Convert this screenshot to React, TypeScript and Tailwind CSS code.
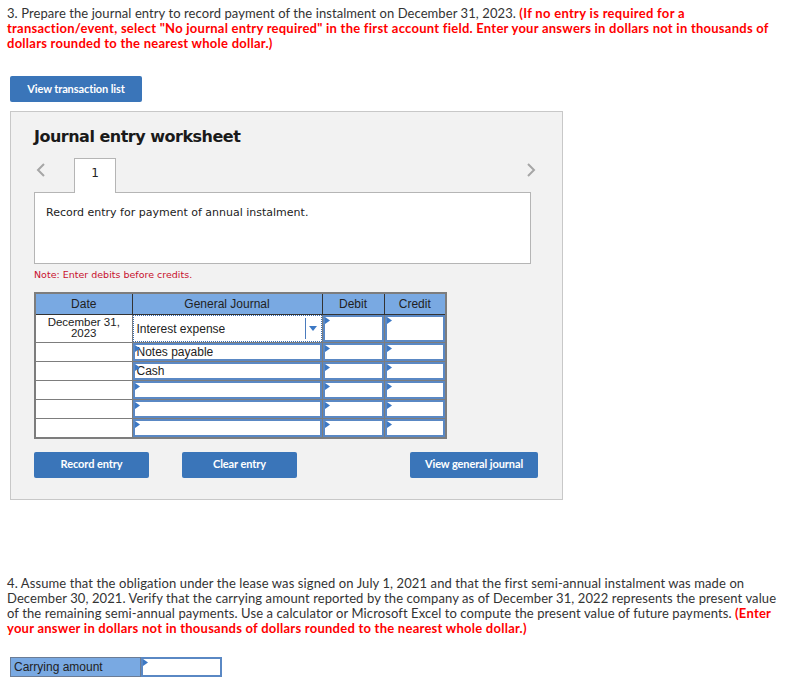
import React from "react";

const Marker = () => (
  <svg width="5" height="7" viewBox="0 0 5 7" className="absolute left-0 top-0">
    <polygon points="0,0 5,3.5 0,7" fill="#3c78c4" />
  </svg>
);

const InputCell = ({ text, h }: { text?: string; h: number }) => (
  <td className="p-0 border border-[#7d7d7d]">
    <div
      className="relative bg-white border-2 border-[#5a88c4] flex items-center pl-[2px] text-[12px] text-[#222]"
      style={{ height: h }}
    >
      <Marker />
      {text}
    </div>
  </td>
);

const DateCell = ({ text, h }: { text?: React.ReactNode; h: number }) => (
  <td className="p-0 border border-[#7d7d7d] bg-white">
    <div className="flex items-center justify-center text-center leading-[11px] text-[11.5px] text-[#222]" style={{ height: h }}>
      {text}
    </div>
  </td>
);

export default function App() {
  const sans = { fontFamily: "Lato, 'Liberation Sans', sans-serif" };
  const verdana = { fontFamily: "'DejaVu Sans', Verdana, sans-serif" };
  const arial = { fontFamily: "'Liberation Sans', Arial, sans-serif" };
  const rows = [
    { date: "", gj: "Notes payable" },
    { date: "", gj: "Cash" },
    { date: "", gj: "" },
    { date: "", gj: "" },
    { date: "", gj: "" },
  ];
  return (
    <div className="w-[794px] h-[688px] bg-white overflow-hidden" style={sans}>
      <div className="pt-[6px] pl-[7px] text-[13px] leading-[15px] text-[#333] whitespace-nowrap tracking-[0.08px]">
        <div>
          3. Prepare the journal entry to record payment of the instalment on December 31, 2023.{" "}
          <span className="font-bold text-[#f00] tracking-[0.3px]">(If no entry is required for a</span>
        </div>
        <div className="font-bold text-[#f00] tracking-[0.25px]">
          transaction/event, select "No journal entry required" in the first account field. Enter your answers in dollars not in thousands of
        </div>
        <div className="font-bold text-[#f00] tracking-[0.25px]">dollars rounded to the nearest whole dollar.)</div>
      </div>

      <button className="mt-[25px] ml-[10px] w-[132px] h-[26px] rounded-[2px] bg-[#3a75b9] text-white text-[11px] font-bold tracking-[-0.1px] flex items-center justify-center">
        View transaction list
      </button>

      <div className="mt-[9px] ml-[10px] w-[553px] h-[389px] bg-[#f2f2f2] border border-[#c8c8c8] pl-[23px] pt-[14px]">
        <div className="text-[16px] leading-[22px] font-bold text-[#1a1a1a] tracking-[-0.5px]" style={verdana}>
          Journal entry worksheet
        </div>
        <div className="mt-[10px] w-[502px] flex items-start justify-between">
          <div className="flex items-start">
            <svg width="10" height="14" viewBox="0 0 10 14" className="mt-[5px] ml-[2px]">
              <polyline points="8,1 2,7 8,13" fill="none" stroke="#a6a6a6" strokeWidth="2" />
            </svg>
            <div
              className="ml-[28px] w-[42px] h-[35px] bg-white border border-b-0 border-[#b5b5b5] flex justify-center pt-[5px] text-[12px] text-[#222] relative z-10"
              style={verdana}
            >
              1
            </div>
          </div>
          <svg width="10" height="14" viewBox="0 0 10 14" className="mt-[5px]">
            <polyline points="2,1 8,7 2,13" fill="none" stroke="#a6a6a6" strokeWidth="2" />
          </svg>
        </div>
        <div
          className="-mt-px w-[497px] h-[72px] bg-white border border-[#b5b5b5] pl-[11px] pt-[12px] text-[11px] text-[#222]"
          style={verdana}
        >
          Record entry for payment of annual instalment.
        </div>
        <div className="mt-[5px] text-[9.5px] leading-[12px] text-[#c8102e]" style={verdana}>
          Note: Enter debits before credits.
        </div>

        <table className="mt-[11px] border-collapse border-2 border-[#7d7d7d] table-fixed" style={arial}>
          <colgroup>
            <col style={{ width: 97 }} />
            <col style={{ width: 190 }} />
            <col style={{ width: 62 }} />
            <col style={{ width: 62 }} />
          </colgroup>
          <thead>
            <tr className="h-[21px] bg-[#79a9e2] text-[12px] text-[#222]">
              <th className="font-normal border border-[#333] p-0">Date</th>
              <th className="font-normal border border-[#333] p-0">General Journal</th>
              <th className="font-normal border border-[#333] p-0">Debit</th>
              <th className="font-normal border border-[#333] p-0">Credit</th>
            </tr>
          </thead>
          <tbody>
            <tr>
              <DateCell
                h={27}
                text={
                  <span>
                    December 31,
                    <br />
                    2023
                  </span>
                }
              />
              <td className="p-0 border border-[#7d7d7d] bg-white">
                <div className="h-[27px] flex items-stretch border border-dotted border-[#3a6fb5]">
                  <div className="flex-1 flex items-center pl-[3px] pt-[2px] text-[12px] text-[#222]">Interest expense</div>
                  <div className="w-[16px] border-l border-[#4a7bbd] my-[2px] flex items-center justify-center">
                    <svg width="8" height="5" viewBox="0 0 8 5">
                      <polygon points="0,0 8,0 4,5" fill="#3c78c4" />
                    </svg>
                  </div>
                </div>
              </td>
              <InputCell h={27} />
              <InputCell h={27} />
            </tr>
            {rows.map((r, i) => (
              <tr key={i}>
                <DateCell h={18} text={r.date} />
                <InputCell h={18} text={r.gj} />
                <InputCell h={18} />
                <InputCell h={18} />
              </tr>
            ))}
          </tbody>
        </table>

        <div className="mt-[13px] flex text-white text-[11px] font-bold tracking-[-0.1px]">
          <button className="w-[115px] h-[26px] rounded-[2px] bg-[#3a75b9] flex items-center justify-center">Record entry</button>
          <button className="ml-[33px] w-[115px] h-[26px] rounded-[2px] bg-[#3a75b9] flex items-center justify-center">Clear entry</button>
          <button className="ml-[113px] w-[128px] h-[26px] rounded-[2px] bg-[#3a75b9] flex items-center justify-center">View general journal</button>
        </div>
      </div>

      <div className="mt-[76px] pl-[7px] text-[13px] leading-[15px] text-[#333] whitespace-nowrap tracking-[0.1px]">
        <div>4. Assume that the obligation under the lease was signed on July 1, 2021 and that the first semi-annual instalment was made on</div>
        <div>December 30, 2021. Verify that the carrying amount reported by the company as of December 31, 2022 represents the present value</div>
        <div>
          of the remaining semi-annual payments. Use a calculator or Microsoft Excel to compute the present value of future payments.{" "}
          <span className="font-bold text-[#f00] tracking-[0.25px]">(Enter</span>
        </div>
        <div className="font-bold text-[#f00] tracking-[0.25px]">your answer in dollars not in thousands of dollars rounded to the nearest whole dollar.)</div>
      </div>

      <div className="mt-[21px] ml-[10px] flex h-[20px]" style={arial}>
        <div className="w-[131px] bg-[#79a9e2] border border-[#6b7c95] flex items-center pl-[3px] text-[12px] text-[#222]">
          Carrying amount
        </div>
        <div className="relative w-[81px] bg-white border-2 border-[#5a88c4]">
          <Marker />
        </div>
      </div>
    </div>
  );
}
